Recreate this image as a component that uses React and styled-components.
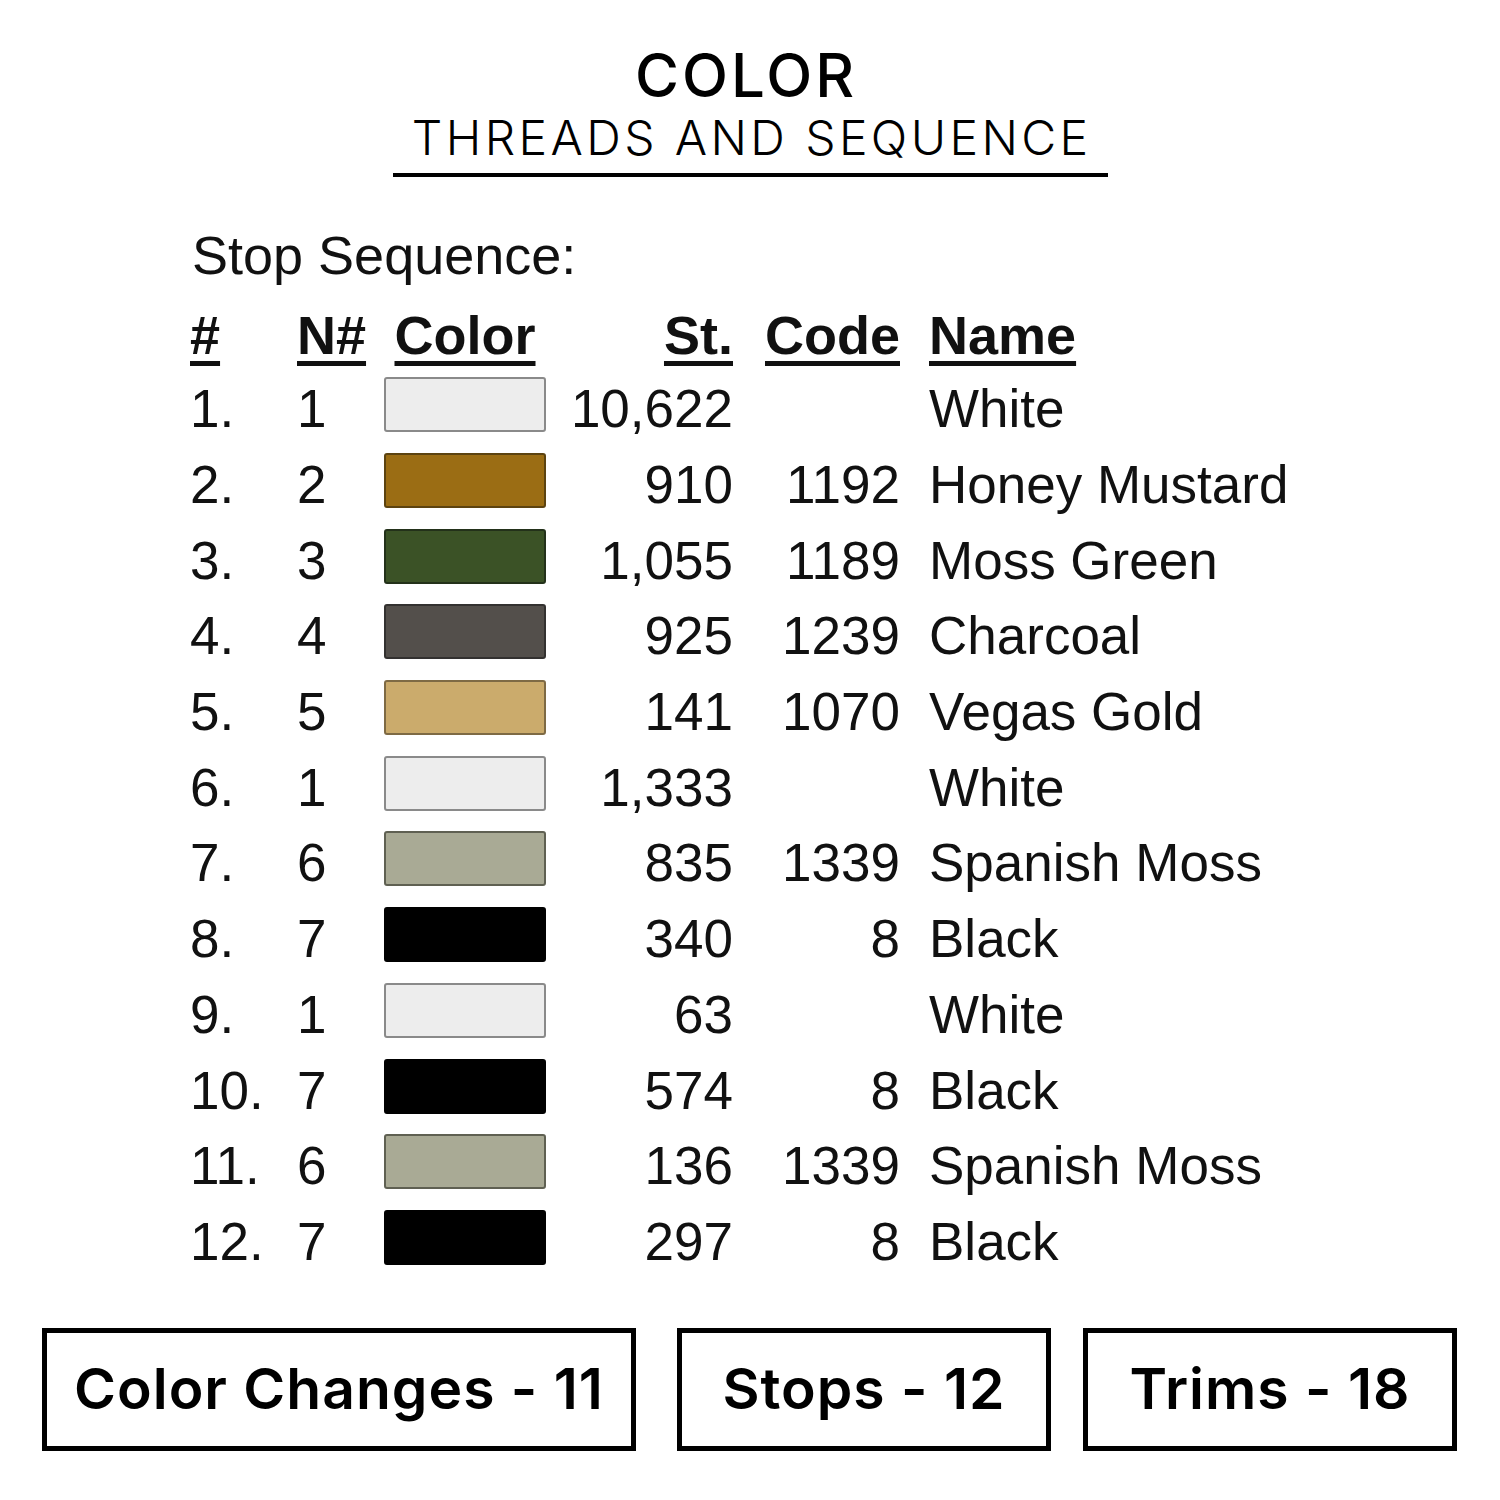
import React from "react";
import styled, { createGlobalStyle } from "styled-components";

const GlobalStyle = createGlobalStyle`
  html, body {
    margin: 0;
    padding: 0;
    background: #ffffff;
  }
`;

const Page = styled.div`
  width: 1500px;
  height: 1500px;
  box-sizing: border-box;
  padding-top: 45px;
  display: flex;
  flex-direction: column;
  background: #ffffff;
  color: #000;
`;

const TitleBlock = styled.div`
  display: flex;
  flex-direction: column;
  align-items: center;
  font-family: "Inter", "Liberation Sans", sans-serif;
`;

const Title = styled.div`
  font-size: 60px;
  line-height: 60px;
  font-weight: 500;
  letter-spacing: 3px;
  padding-left: 3px;
  margin-left: -11px;
`;

const Subtitle = styled.div`
  font-size: 48px;
  line-height: 46px;
  font-weight: 300;
  letter-spacing: 3.4px;
  padding-left: 3.4px;
  margin-top: 10px;
`;

const Rule = styled.div`
  width: 715px;
  height: 4px;
  background: #000;
  margin-top: 12px;
`;

const Section = styled.div`
  padding-left: 190px;
  font-family: "Liberation Sans", Arial, sans-serif;
  color: #111;
`;

const Caption = styled.div`
  font-size: 54px;
  line-height: 60px;
  margin-top: 48px;
  padding-left: 2px;
`;

const Table = styled.div`
  display: grid;
  grid-template-columns: 107px 87px 162px 187px 167px auto;
  grid-auto-rows: 75.7px;
  grid-template-rows: 73px;
  margin-top: 13px;
  font-size: 53px;
`;

const Cell = styled.div`
  display: flex;
  align-items: center;
  justify-content: ${(p) =>
    p.$right ? "flex-end" : p.$center ? "center" : "flex-start"};
  padding-left: ${(p) => (p.$name ? "29px" : "0")};
  white-space: nowrap;
  line-height: 1;
`;

const Head = styled.span`
  font-size: 54px;
  font-weight: 700;
  text-decoration: underline;
  text-decoration-thickness: 5px;
  text-underline-offset: 7px;
`;

const Swatch = styled.div`
  width: 162px;
  height: 55px;
  box-sizing: border-box;
  margin-bottom: 8px;
  border-radius: 3px;
  background: ${(p) => p.$color};
  border: 2px solid ${(p) => p.$edge};
`;

const Footer = styled.div`
  display: flex;
  margin-top: 49px;
  padding-left: 42px;
`;

const StatBox = styled.div`
  width: ${(p) => p.$width}px;
  height: 123px;
  margin-left: ${(p) => p.$gap}px;
  box-sizing: border-box;
  border: 5px solid #000;
  display: flex;
  align-items: center;
  justify-content: center;
  font-family: "Inter", "Liberation Sans", sans-serif;
  font-weight: 600;
  font-size: 57px;
  letter-spacing: 1px;
  padding-bottom: 2px;
`;

const swatches = {
  white: ["#ededed", "#8a8a8a"],
  honey: ["#9b6d14", "#5c4310"],
  moss: ["#3b5226", "#23311a"],
  charcoal: ["#534f4b", "#333130"],
  gold: ["#cbab6c", "#7e6a44"],
  spanish: ["#a9aa95", "#5f6052"],
  black: ["#000000", "#000000"],
};

const rows = [
  ["1.", "1", "white", "10,622", "", "White"],
  ["2.", "2", "honey", "910", "1192", "Honey Mustard"],
  ["3.", "3", "moss", "1,055", "1189", "Moss Green"],
  ["4.", "4", "charcoal", "925", "1239", "Charcoal"],
  ["5.", "5", "gold", "141", "1070", "Vegas Gold"],
  ["6.", "1", "white", "1,333", "", "White"],
  ["7.", "6", "spanish", "835", "1339", "Spanish Moss"],
  ["8.", "7", "black", "340", "8", "Black"],
  ["9.", "1", "white", "63", "", "White"],
  ["10.", "7", "black", "574", "8", "Black"],
  ["11.", "6", "spanish", "136", "1339", "Spanish Moss"],
  ["12.", "7", "black", "297", "8", "Black"],
];

export default function App() {
  return (
    <Page>
      <GlobalStyle />
      <TitleBlock>
        <Title>COLOR</Title>
        <Subtitle>THREADS AND SEQUENCE</Subtitle>
        <Rule />
      </TitleBlock>
      <Section>
        <Caption>Stop Sequence:</Caption>
        <Table>
          <Cell><Head>#</Head></Cell>
          <Cell><Head>N#</Head></Cell>
          <Cell $center><Head>Color</Head></Cell>
          <Cell $right><Head>St.</Head></Cell>
          <Cell $right><Head>Code</Head></Cell>
          <Cell $name><Head>Name</Head></Cell>
          {rows.map(([num, n, sw, st, code, name]) => (
            <React.Fragment key={num}>
              <Cell>{num}</Cell>
              <Cell>{n}</Cell>
              <Cell>
                <Swatch $color={swatches[sw][0]} $edge={swatches[sw][1]} />
              </Cell>
              <Cell $right>{st}</Cell>
              <Cell $right>{code}</Cell>
              <Cell $name>{name}</Cell>
            </React.Fragment>
          ))}
        </Table>
      </Section>
      <Footer>
        <StatBox $width={594} $gap={0}>Color Changes - 11</StatBox>
        <StatBox $width={374} $gap={41}>Stops - 12</StatBox>
        <StatBox $width={374} $gap={32}>Trims - 18</StatBox>
      </Footer>
    </Page>
  );
}
